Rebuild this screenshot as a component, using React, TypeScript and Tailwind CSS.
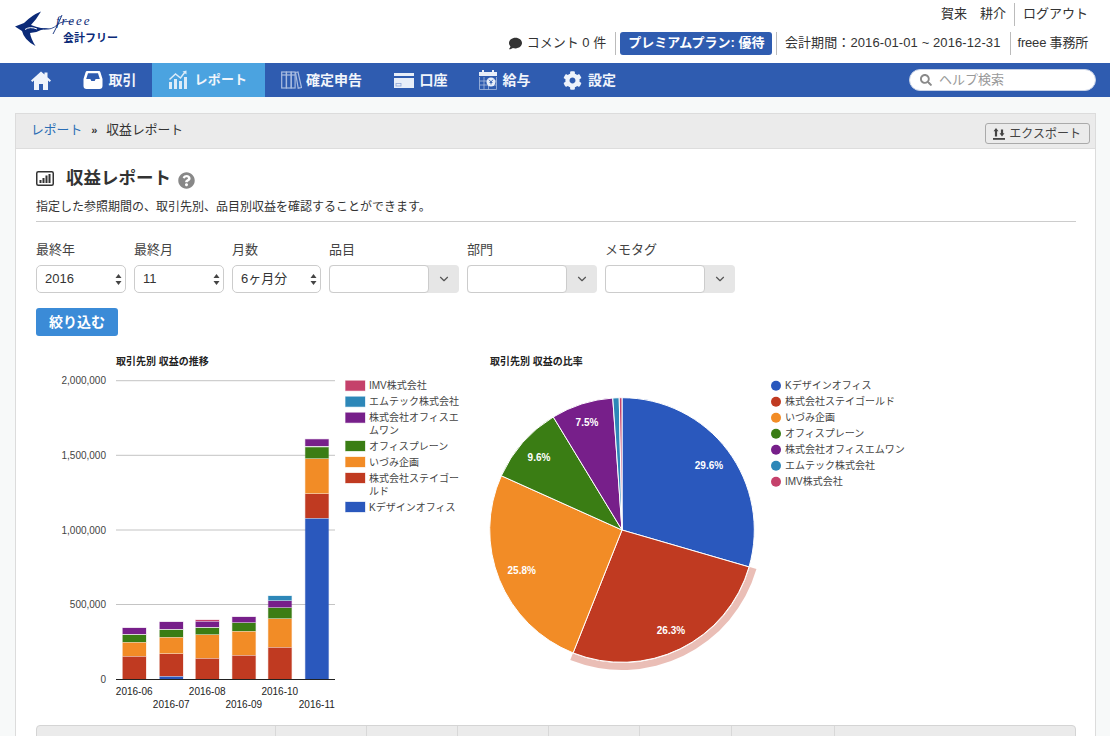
import { ReactNode } from "react";
import { FaCog, FaComment, FaSearch, FaQuestionCircle } from "react-icons/fa";
import { ChevronDown } from "lucide-react";

const BLUE = "#2a58bd";
const RED = "#c03a21";
const ORANGE = "#f28c26";
const GREEN = "#3a7d14";
const PURPLE = "#771f8a";
const TEAL = "#2d87b8";
const PINK = "#c5416b";

function HomeIcon() {
  return (
    <svg width="20" height="19" viewBox="0 0 20 19" fill="#eef3fb">
      <path d="M10 .5 0 9.500l1.300 1.500L3 9.600V19h5v-6h4v6h5V9.600l1.700 1.400L20 9.500l-3.500-3.200V1.500h-3v2.100z" />
    </svg>
  );
}

function InboxIcon() {
  return (
    <svg width="20" height="20" viewBox="0 0 20 20">
      <path
        fill="#fff"
        fillRule="evenodd"
        d="M4.500 1h11c1 0 1.600.5 2 1.400l2 6.600v7c0 1.800-1.200 3-3 3H3.500c-1.800 0-3-1.200-3-3V9l2-6.600C2.900 1.500 3.500 1 4.500 1zM5 3.200 3.200 9H7c.4 0 .6.2.7.5l.6 1.500h3.400l.6-1.500c.1-.3.3-.5.7-.5h3.800L15 3.200z"
      />
    </svg>
  );
}

function ReportIcon() {
  return (
    <svg width="20" height="20" viewBox="0 0 20 20" fill="#dcebf8">
      <rect x="1" y="12" width="3" height="7" />
      <rect x="6" y="9" width="3" height="10" />
      <rect x="11" y="11" width="3" height="8" />
      <rect x="16" y="7" width="3" height="12" />
      <path d="M1.500 9.500 7.500 4l5 4 4.500-6" fill="none" stroke="#dcebf8" strokeWidth="1.500" />
      <path d="M14.500 1.500 18.500 0.500v4z" />
    </svg>
  );
}

function BindersIcon() {
  return (
    <svg width="21" height="18" viewBox="0 0 21 18" fill="none" stroke="#a9bce0" strokeWidth="1.200">
      <rect x="0.700" y="1" width="4.600" height="16" />
      <rect x="5.500" y="1" width="4.600" height="16" />
      <rect x="10.300" y="1" width="3.800" height="16" />
      <path d="M14.500 1.500 17 1l3.500 15.500-3.300.7z" />
      <path d="M0.700 4h13.400" />
    </svg>
  );
}

function CardIcon() {
  return (
    <svg width="20" height="15" viewBox="0 0 20 15">
      <rect x="0" y="0" width="20" height="3" fill="#e8eef8" />
      <rect x="0" y="5" width="20" height="10" fill="#e8eef8" />
      <rect x="2" y="10.500" width="5" height="2.500" fill="none" stroke="#8ea6d6" strokeWidth="0.800" />
    </svg>
  );
}

function PayIcon() {
  return (
    <svg width="18" height="20" viewBox="0 0 18 20">
      <rect x="0" y="2" width="18" height="4" fill="#e8eef8" />
      <rect x="3" y="0" width="2" height="3" fill="#e8eef8" />
      <rect x="13" y="0" width="2" height="3" fill="#e8eef8" />
      <path d="M.5 7v12.500h17V7M.5 11h17M.5 15h17M5 7v12.500M9.500 11v8.500" fill="none" stroke="#a9bce0" strokeWidth="0.800" />
      <circle cx="12" cy="12" r="4.500" fill="#e8eef8" />
      <path d="M10.200 9.800 12 12l1.800-2.200M12 12v2.500M10.500 12.500h3" fill="none" stroke="#2f5cb0" strokeWidth="0.900" />
    </svg>
  );
}

function TitleChartIcon() {
  return (
    <svg width="18" height="15" viewBox="0 0 18 15">
      <rect x="0.750" y="0.750" width="16.500" height="13.500" rx="1.500" fill="none" stroke="#333" strokeWidth="1.500" />
      <rect x="3.500" y="9" width="2" height="3" fill="#333" />
      <rect x="6.500" y="7" width="2" height="5" fill="#333" />
      <rect x="9.500" y="4.500" width="2" height="7.500" fill="#333" />
      <rect x="12.500" y="3" width="2" height="9" fill="#333" />
    </svg>
  );
}

function ExportIcon() {
  return (
    <svg width="12" height="12" viewBox="0 0 12 12" fill="#444">
      <path d="M3 0 5.500 3.200H4.100v5.300H1.900V3.200H.5z" />
      <path d="M9 8.500 6.500 5.300h1.400V1.500h2.200v3.800h1.400z" />
      <rect x="0" y="10" width="12" height="1.800" />
    </svg>
  );
}

function Logo() {
  return (
    <svg width="130" height="63" viewBox="0 0 130 63">
      <path
        fill="#0b2a78"
        d="M15 26.500 24 23Q32 15 41 11.500 36 20 31 25 36 27 41 28L50 28.500 41 30Q36 33 30 33 31 39 35.500 46 24 40 22 31Z"
      />
      <path d="M25 29.500Q30 26 37 29" fill="none" stroke="#fff" strokeWidth="1" />
      <path d="M44 29Q52 30 57 25T74 22" fill="none" stroke="#0b2a78" strokeWidth="0.800" />
      <path d="M62 15Q58 25 53 34" fill="none" stroke="#0b2a78" strokeWidth="0.900" />
      <text x="56" y="25" fontFamily="'Liberation Serif', serif" fontStyle="italic" fontSize="13" letterSpacing="2" fill="#0b2a78">
        freee
      </text>
      <text x="63" y="42" fontSize="11" fontWeight="700" fill="#0b2a78">
        会計フリー
      </text>
    </svg>
  );
}

function Sep({ className }: { className: string }) {
  return <span className={`h-[23px] w-px shrink-0 bg-[#bbb] ${className}`} />;
}

function TopBar() {
  return (
    <div className="flex h-[63px] justify-between bg-white">
      <Logo />
      <div className="flex flex-col items-end pr-[22px] text-[13px] text-[#333]">
        <div className="mt-[3px] flex h-[23px] items-center">
          <span className="pb-[2px]">賀来</span>
          <span className="ml-[13px] pb-[2px]">耕介</span>
          <Sep className="mx-2" />
          <span className="pb-[2px]">ログアウト</span>
        </div>
        <div className="mt-[6px] flex h-[23px] items-center">
          <FaComment className="mr-[5px] text-[#333]" size={13} />
          <span className="pb-[1px]">コメント 0 件</span>
          <Sep className="ml-[9px] mr-1" />
          <span className="flex h-[23px] items-center rounded-[3px] bg-[#2f5cb0] px-2 pb-[1px] font-bold text-white">プレミアムプラン: 優待</span>
          <Sep className="ml-1 mr-[7.500px]" />
          <span className="pb-[1px] tracking-[0.1px]">会計期間：2016-01-01 ~ 2016-12-31</span>
          <Sep className="ml-[9px] mr-[7px]" />
          <span className="pb-[1px] tracking-[-0.2px]">freee 事務所</span>
        </div>
      </div>
    </div>
  );
}

function NavItem({ icon, label, width, gap, active, small }: { icon: ReactNode; label: string; width: string; gap: string; active?: boolean; small?: boolean }) {
  return (
    <div className={`flex h-full items-center pl-4 ${width} ${gap} ${active ? "bg-[#4ba3e0]" : ""}`}>
      {icon}
      {label && <span className={`font-bold text-[#f1f5fb] ${small ? "text-[13px] tracking-[0.2px]" : "text-[14px]"}`}>{label}</span>}
    </div>
  );
}

function NavBar() {
  return (
    <div className="flex h-[34px] items-center bg-[#2f5cb0] pl-[15px] pr-[14px]">
      <NavItem width="w-[51.500px]" gap="gap-0" icon={<HomeIcon />} label="" />
      <NavItem width="w-[85px]" gap="gap-[6px]" icon={<InboxIcon />} label="取引" />
      <NavItem width="w-[113px]" gap="gap-[7px]" icon={<ReportIcon />} label="レポート" active small />
      <NavItem width="w-[113.500px]" gap="gap-[4.500px]" icon={<BindersIcon />} label="確定申告" />
      <NavItem width="w-[85px]" gap="gap-[5.500px]" icon={<CardIcon />} label="口座" />
      <NavItem width="w-[84px]" gap="gap-[5.500px]" icon={<PayIcon />} label="給与" />
      <NavItem width="w-[85px]" gap="gap-[6px]" icon={<FaCog size={19} color="#eef3fb" />} label="設定" />
      <div className="ml-auto flex h-[22px] w-[187px] items-center rounded-full border border-[#c8d2e6] bg-white pl-[10px]">
        <FaSearch size={12} color="#8a8a8a" />
        <span className="ml-[7px] text-[13px] text-[#999]">ヘルプ検索</span>
      </div>
    </div>
  );
}

function Spinner() {
  return (
    <svg width="7" height="11" viewBox="0 0 7 11" fill="#444">
      <path d="M3.500 0 6.500 4H.5z" />
      <path d="M3.500 11 .5 7h6z" />
    </svg>
  );
}

function SelectBox({ label, value, width }: { label: string; value: string; width: string }) {
  return (
    <div className={width}>
      <div className="mb-[6px] h-[19px] text-[13px] leading-[19px] text-[#444]">{label}</div>
      <div className="flex h-[28px] items-center justify-between rounded-[5px] border border-[#ccc] bg-white pl-2 pr-[3px] text-[13px] text-[#333]">
        <span className="pb-[1px]">{value}</span>
        <Spinner />
      </div>
    </div>
  );
}

function ComboBox({ label }: { label: string }) {
  return (
    <div className="w-[130px]">
      <div className="mb-[6px] h-[19px] text-[13px] leading-[19px] text-[#444]">{label}</div>
      <div className="flex h-[28px] rounded-[4px] bg-[#e6e6e6]">
        <div className="w-[100px] rounded-[4px] border border-[#ccc] bg-white" />
        <div className="flex flex-1 items-center justify-center">
          <ChevronDown size={14} strokeWidth={2} color="#555" />
        </div>
      </div>
    </div>
  );
}

const barRows: { color: string; top: number; bottom: number }[][] = [
  [
    { color: RED, top: 656.7, bottom: 679.3 },
    { color: ORANGE, top: 642.7, bottom: 656 },
    { color: GREEN, top: 635, bottom: 642 },
    { color: PURPLE, top: 628, bottom: 634 },
  ],
  [
    { color: BLUE, top: 676.7, bottom: 679.3 },
    { color: RED, top: 654, bottom: 676 },
    { color: ORANGE, top: 637.7, bottom: 653.3 },
    { color: GREEN, top: 630, bottom: 637 },
    { color: PURPLE, top: 622, bottom: 629 },
  ],
  [
    { color: RED, top: 658.7, bottom: 679.3 },
    { color: ORANGE, top: 635, bottom: 658 },
    { color: GREEN, top: 628, bottom: 634.3 },
    { color: PURPLE, top: 621.7, bottom: 627 },
    { color: PINK, top: 620, bottom: 621 },
  ],
  [
    { color: RED, top: 655.7, bottom: 679.3 },
    { color: ORANGE, top: 631.7, bottom: 655 },
    { color: GREEN, top: 623, bottom: 631 },
    { color: PURPLE, top: 617, bottom: 622.3 },
  ],
  [
    { color: RED, top: 647.7, bottom: 679.3 },
    { color: ORANGE, top: 619, bottom: 647 },
    { color: GREEN, top: 608, bottom: 618.3 },
    { color: PURPLE, top: 601, bottom: 607.3 },
    { color: TEAL, top: 596, bottom: 600.3 },
  ],
  [
    { color: BLUE, top: 518.7, bottom: 679.3 },
    { color: RED, top: 494, bottom: 518 },
    { color: ORANGE, top: 459, bottom: 493.3 },
    { color: GREEN, top: 447.3, bottom: 458.3 },
    { color: PURPLE, top: 439.3, bottom: 446 },
  ],
];
const barX = [122.7, 159.7, 195.7, 232.3, 268.3, 305.3];
const months = ["2016-06", "2016-07", "2016-08", "2016-09", "2016-10", "2016-11"];
const ticks = [
  { label: "2,000,000", y: 380.7 },
  { label: "1,500,000", y: 455.3 },
  { label: "1,000,000", y: 530 },
  { label: "500,000", y: 604.5 },
];
const barLegend = [
  { color: PINK, lines: ["IMV株式会社"], y: 385.7 },
  { color: TEAL, lines: ["エムテック株式会社"], y: 401.7 },
  { color: PURPLE, lines: ["株式会社オフィスエ", "ムワン"], y: 417.7 },
  { color: GREEN, lines: ["オフィスプレーン"], y: 446 },
  { color: ORANGE, lines: ["いづみ企画"], y: 462 },
  { color: RED, lines: ["株式会社ステイゴー", "ルド"], y: 478 },
  { color: BLUE, lines: ["Kデザインオフィス"], y: 507 },
];

function BarChart() {
  return (
    <svg width="434" height="375" viewBox="36 345 434 375" className="shrink-0">
      <text x="116" y="364.500" fontSize="10" fontWeight="700" fill="#222">取引先別 収益の推移</text>
      {ticks.map((t) => (
        <g key={t.label}>
          <rect x="116" y={t.y - 0.5} width="219" height="1" fill="#c4c4c4" />
          <text x="106" y={t.y + 3.5} fontSize="10" textAnchor="end" fill="#444">{t.label}</text>
        </g>
      ))}
      <text x="106" y="683" fontSize="10" textAnchor="end" fill="#444">0</text>
      {barRows.map((segments, i) =>
        segments.map((s) => (
          <rect
            key={`${i}-${s.color}`}
            x={barX[i]}
            y={s.top}
            width="23.300"
            height={s.bottom - s.top}
            fill={s.color}
            stroke={s.color}
            strokeOpacity="0.25"
            strokeWidth="1"
          />
        ))
      )}
      <rect x="116" y="679" width="219" height="1" fill="#222" />
      {months.map((m, i) => (
        <text key={m} x={barX[i] + 11.5} y={i % 2 === 0 ? 695 : 708} fontSize="10" textAnchor="middle" fill="#222">{m}</text>
      ))}
      {barLegend.map((l) => (
        <g key={l.lines[0]}>
          <rect x="345.500" y={l.y - 5} width="19.500" height="10" fill={l.color} stroke={l.color} strokeOpacity="0.3" strokeWidth="1" />
          {l.lines.map((line, j) => (
            <text key={line} x="369" y={l.y + 3.5 + j * 13} fontSize="10" fill="#444">{line}</text>
          ))}
        </g>
      ))}
    </svg>
  );
}

const CX = 622;
const CY = 530;
const R = 132.3;

function polar(deg: number, r: number) {
  const a = (deg * Math.PI) / 180;
  return `${(CX + r * Math.sin(a)).toFixed(2)} ${(CY - r * Math.cos(a)).toFixed(2)}`;
}

function slicePath(from: number, to: number) {
  const large = to - from > 180 ? 1 : 0;
  return `M${CX} ${CY}L${polar(from, R)}A${R} ${R} 0 ${large} 1 ${polar(to, R)}Z`;
}

function ringPath(from: number, to: number, inner: number, outer: number) {
  return `M${polar(from, inner)}L${polar(from, outer)}A${outer} ${outer} 0 0 1 ${polar(to, outer)}L${polar(to, inner)}A${inner} ${inner} 0 0 0 ${polar(from, inner)}Z`;
}

const slices = [
  { color: BLUE, from: 0, to: 106.2 },
  { color: RED, from: 106.2, to: 201.7 },
  { color: ORANGE, from: 201.7, to: 294.2 },
  { color: GREEN, from: 294.2, to: 328.7 },
  { color: PURPLE, from: 328.7, to: 356 },
  { color: TEAL, from: 356, to: 358.8 },
  { color: PINK, from: 358.8, to: 360 },
];
const pieLabels = [
  { text: "29.6%", x: 709, y: 468.5 },
  { text: "7.5%", x: 587, y: 425.5 },
  { text: "9.6%", x: 539, y: 460.5 },
  { text: "25.8%", x: 521.7, y: 574 },
  { text: "26.3%", x: 671, y: 634 },
];
const pieLegend = [
  { color: BLUE, text: "Kデザインオフィス" },
  { color: RED, text: "株式会社ステイゴールド" },
  { color: ORANGE, text: "いづみ企画" },
  { color: GREEN, text: "オフィスプレーン" },
  { color: PURPLE, text: "株式会社オフィスエムワン" },
  { color: TEAL, text: "エムテック株式会社" },
  { color: PINK, text: "IMV株式会社" },
];

function PieChart() {
  return (
    <svg width="606" height="375" viewBox="470 345 606 375" className="shrink-0">
      <text x="490" y="364.500" fontSize="10" fontWeight="700" fill="#222">取引先別 収益の比率</text>
      <path d={ringPath(106.2, 201.7, 133, 140)} fill={RED} fillOpacity="0.33" />
      {slices.map((s) => (
        <path key={s.color} d={slicePath(s.from, s.to)} fill={s.color} stroke="#fff" strokeWidth="1" />
      ))}
      {pieLabels.map((l) => (
        <text key={l.text} x={l.x} y={l.y} fontSize="10" textAnchor="middle" fill="#fff" fontWeight="700">{l.text}</text>
      ))}
      {pieLegend.map((l, i) => (
        <g key={l.text}>
          <circle cx="776" cy={385.7 + i * 16} r="5" fill={l.color} />
          <text x="785" y={389.2 + i * 16} fontSize="10" fill="#444">{l.text}</text>
        </g>
      ))}
    </svg>
  );
}

function TableHead() {
  const cols = ["w-[239px]", "w-[91px]", "w-[91px]", "w-[91px]", "w-[91px]", "w-[92px]", "w-[103px]", "flex-1"];
  return (
    <div className="mt-[5px] flex h-[30px] rounded-t-[4px] border border-[#d4d4d4] bg-[#ebebeb]">
      {cols.map((c, i) => (
        <div key={i} className={`${c} border-r border-[#d8d8d8] last:border-r-0`} />
      ))}
    </div>
  );
}

export default function App() {
  return (
    <div className="h-[736px] w-full overflow-hidden bg-[#f7f9f9] font-['Liberation_Sans','Noto_Sans_CJK_JP',sans-serif] text-[#333]">
      <TopBar />
      <NavBar />
      <div className="ml-[15px] mr-[14px] mt-4 border border-[#dcdcdc] bg-white">
        <div className="flex h-[35px] items-center justify-between border-b border-[#ddd] bg-[#ebebeb] pl-[15px] pr-[5px] text-[12.800px]">
          <div className="flex items-center pb-[2px]">
            <span className="text-[#2a6db5]">レポート</span>
            <span className="mx-[9px] text-[11px] font-bold">»</span>
            <span>収益レポート</span>
          </div>
          <div className="mt-[5px] flex h-[21px] items-center gap-1 rounded-[3px] border border-[#aaa] pl-[7px] pr-2 text-[12px] text-[#444]">
            <ExportIcon />
            <span>エクスポート</span>
          </div>
        </div>
        <div className="pl-5 pr-[19px]">
          <div className="mt-[17px] flex h-[24px] items-center">
            <TitleChartIcon />
            <h1 className="ml-[12px] text-[17.500px] font-bold text-[#333]">収益レポート</h1>
            <FaQuestionCircle className="ml-[7px] mt-1" size={17} color="#888" />
          </div>
          <p className="mt-[8px] text-[12px] leading-[18px] text-[#333]">指定した参照期間の、取引先別、品目別収益を確認することができます。</p>
          <div className="mt-[5px] h-px bg-[#ccc]" />
          <div className="mt-[18px] flex gap-2">
            <SelectBox label="最終年" value="2016" width="w-[90px]" />
            <SelectBox label="最終月" value="11" width="w-[90px]" />
            <SelectBox label="月数" value="6ヶ月分" width="w-[89px]" />
            <ComboBox label="品目" />
            <ComboBox label="部門" />
            <ComboBox label="メモタグ" />
          </div>
          <button className="mt-[15px] block h-[28px] w-[82px] rounded-[3px] bg-[#3b8bd7] text-[14px] font-bold text-white">絞り込む</button>
          <div className="mt-[9px] flex">
            <BarChart />
            <PieChart />
          </div>
          <TableHead />
        </div>
      </div>
    </div>
  );
}
